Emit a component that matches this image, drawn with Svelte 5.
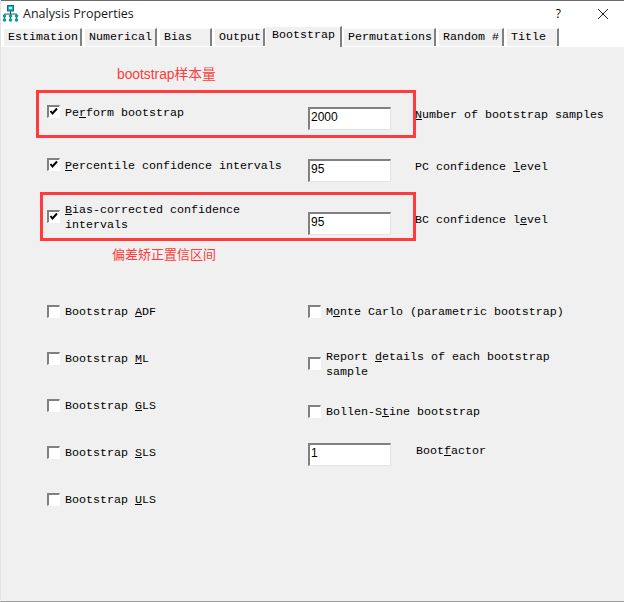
<script lang="ts">
  // Amos "Analysis Properties" dialog, Bootstrap tab, with red annotations on top.
  const tabs = [
    { label: "Estimation", width: 79 },
    { label: "Numerical", width: 73 },
    { label: "Bias", width: 53 },
    { label: "Output", width: 51 },
    { label: "Bootstrap", width: 77, active: true },
    { label: "Permutations", width: 93 },
    { label: "Random #", width: 66 },
    { label: "Title", width: 53 },
  ];

  const leftChecks = [
    ["Bootstrap ", "A", "DF"],
    ["Bootstrap ", "M", "L"],
    ["Bootstrap ", "G", "LS"],
    ["Bootstrap ", "S", "LS"],
    ["Bootstrap ", "U", "LS"],
  ];
</script>

{#snippet check(on: boolean)}
  <span class="check">
    {#if on}
      <svg width="10" height="10" viewBox="0 0 10 10"><path d="M1.5 4 L3.5 6.5 L8 1.5" fill="none" stroke="#000" stroke-width="2" /></svg>
    {/if}
  </span>
{/snippet}

{#snippet label(a: string, u: string, b: string)}{a}<u>{u}</u>{b}{/snippet}

<div class="window">
  <header class="titlebar">
    <svg class="logo" width="17" height="17" viewBox="0 0 17 17">
      <path d="M8.5 6 V9 M2.5 9 H14.5 M2.5 9 V15 M8.5 9 V15 M14.5 9 V15" stroke="#33505a" stroke-width="1" fill="none" />
      <rect x="5.5" y="0.5" width="6" height="5.5" fill="#14b4b8" stroke="#0b6f78" />
      <rect x="7" y="2" width="3" height="2" fill="#b8f4f4" />
      {#each [2.5, 8.5, 14.5] as x}
        <circle cx={x} cy="11" r="1.8" fill="#0f9aa0" />
        <circle cx={x} cy="15" r="1.8" fill="#0f9aa0" />
      {/each}
    </svg>
    <span class="title">Analysis Properties</span>
    <span class="help">?</span>
    <svg class="close" width="12" height="12" viewBox="0 0 12 12"><path d="M1 1 L11 11 M11 1 L1 11" stroke="#222" stroke-width="1" fill="none" /></svg>
  </header>

  <nav class="tabs">
    {#each tabs as t}
      <span class="tab" class:active={t.active} style:width="{t.width}px">{t.label}</span>
    {/each}
  </nav>

  <main class="panel">
    <section class="row row-a">
      {@render check(true)}
      <span class="text">{@render label("Pe", "r", "form bootstrap")}</span>
      <span class="input">2000</span>
      <span class="side">{@render label("", "N", "umber of bootstrap samples")}</span>
    </section>
    <section class="row row-b">
      {@render check(true)}
      <span class="text">{@render label("", "P", "ercentile confidence intervals")}</span>
      <span class="input">95</span>
      <span class="side">{@render label("PC confidence ", "l", "evel")}</span>
    </section>
    <section class="row row-c">
      {@render check(true)}
      <span class="text">{@render label("", "B", "ias-corrected confidence")}<br />intervals</span>
      <span class="input">95</span>
      <span class="side">{@render label("BC confidence l", "e", "vel")}</span>
    </section>

    <section class="lower">
      <div class="col col-left">
        {#each leftChecks as [a, u, b]}
          <div class="opt">
            {@render check(false)}
            <span class="text">{@render label(a, u, b)}</span>
          </div>
        {/each}
      </div>
      <div class="col col-right">
        <div class="opt">
          {@render check(false)}
          <span class="text">{@render label("M", "o", "nte Carlo (parametric bootstrap)")}</span>
        </div>
        <div class="opt report">
          {@render check(false)}
          <span class="text">{@render label("Report ", "d", "etails of each bootstrap")}<br />sample</span>
        </div>
        <div class="opt bollen">
          {@render check(false)}
          <span class="text">{@render label("Bollen-S", "t", "ine bootstrap")}</span>
        </div>
        <div class="factor">
          <span class="input">1</span>
          <span class="side">{@render label("Boot", "f", "actor")}</span>
        </div>
      </div>
    </section>
  </main>

  <!-- hand-drawn annotations pasted over the dialog -->
  <div class="mark mark-a"></div>
  <div class="mark mark-b"></div>
  <span class="note note-a">bootstrap样本量</span>
  <span class="note note-b">偏差矫正置信区间</span>
</div>

<style>
  :global(body) {
    margin: 0;
    background: #f0f0f0;
  }
  .window {
    position: relative;
    width: 624px;
    height: 602px;
    overflow: hidden;
    box-sizing: border-box;
    display: flex;
    flex-direction: column;
    background: #f0f0f0;
    border-bottom: 1px solid #a0a0a0;
    border-left: 1px solid #e3e3e3;
    font-family: "Liberation Mono", monospace;
    font-size: 11.67px;
    line-height: 15px;
    color: #000;
  }
  .titlebar {
    display: flex;
    align-items: center;
    height: 26px;
    box-sizing: border-box;
    margin-left: -1px;
    padding-left: 2px;
    background: #fff;
    border-top: 1px solid #6b6b6b;
  }
  .title {
    margin-left: 4px;
    font-family: "Open Sans", sans-serif;
    font-size: 12.5px;
    color: #1a1a1a;
  }
  .help {
    margin-left: auto;
    font-family: "Open Sans", sans-serif;
    font-size: 12px;
  }
  .close {
    margin: 0 15px 0 36px;
  }
  .tabs {
    display: flex;
    align-items: flex-end;
    gap: 2px;
    height: 21px;
    padding: 0 0 1px 2px;
    background: #fff;
    box-sizing: border-box;
  }
  .tab {
    box-sizing: border-box;
    height: 18px;
    padding: 1px 0 0 4px;
    background: #f0f0f0;
    border-left: 1px solid #fff;
    border-right: 2px solid #808080;
    white-space: pre;
    border-top: 1px solid #fff;
  }
  .tab.active {
    height: 21px;
    margin: 0 -1px -1px -2px;
    padding: 1px 0 0 6px;
    position: relative;
  }
  .panel {
    flex: 1;
    padding-top: 57px;
  }
  .row {
    display: grid;
    grid-template-columns: 18px 243px 107px auto;
    padding-left: 46px;
    align-items: start;
  }
  .check {
    display: block;
    box-sizing: border-box;
    width: 13px;
    height: 13px;
    background: #fff;
    border: 2px solid #808080;
    border-right: 1px solid #fff;
    border-bottom: 1px solid #fff;
  }
  .check svg {
    display: block;
  }
  .text,
  .side {
    padding-top: 1px;
  }
  .input {
    display: block;
    box-sizing: border-box;
    width: 83px;
    height: 23px;
    padding: 1px 0 0 1px;
    background: #fff;
    border: 2px solid #808080;
    border-right: 1px solid #e3e3e3;
    border-bottom: 1px solid #e3e3e3;
    font-family: "Liberation Sans", sans-serif;
    font-size: 12px;
  }
  .row-a {
    height: 53px;
  }
  .row-a .check { margin-top: 1px; }
  .row-a .text { margin-top: 1px; }
  .row-a .input { margin-top: 3px; }
  .row-a .side { margin-top: 3px; }

  .row-b {
    height: 44px;
  }
  .row-b .check { margin-top: 1px; }
  .row-b .text { margin-top: 1px; }
  .row-b .input { margin-top: 2px; }
  .row-b .side { margin-top: 2px; }

  .row-c {
    height: 103px;
  }
  .row-c .check { margin-top: 9px; }
  .row-c .text { margin-top: 1px; }
  .row-c .input { margin-top: 11px; }
  .row-c .side { margin-top: 11px; }

  .lower {
    display: grid;
    grid-template-columns: 261px auto;
    padding-left: 46px;
  }
  .col-left .opt {
    height: 47px;
  }
  .opt {
    display: flex;
    align-items: flex-start;
    gap: 5px;
  }
  .opt .check {
    margin-top: 1px;
    flex: none;
  }
  .col-right .opt:first-child {
    height: 44px;
  }
  .report {
    height: 56px;
  }
  .report .text {
    margin-top: 1px;
  }
  .opt.report .check {
    margin-top: 9px;
  }
  .bollen {
    height: 34px;
  }
  .factor {
    display: flex;
    align-items: flex-start;
    gap: 25px;
    margin-top: 5px;
  }
  .mark {
    position: absolute;
    box-sizing: border-box;
    border: 3px solid #ff3b3b;
  }
  .mark-a {
    left: 35px;
    top: 90px;
    width: 380px;
    height: 48px;
  }
  .mark-b {
    left: 39px;
    top: 192px;
    width: 376px;
    height: 49px;
  }
  .note {
    position: absolute;
    font-family: "Liberation Sans", "Noto Sans CJK SC", sans-serif;
    color: #ff3b3b;
    white-space: nowrap;
  }
  .note-a {
    left: 116px;
    top: 67px;
    font-size: 13.8px;
  }
  .note-b {
    left: 111px;
    top: 247px;
    font-size: 13px;
  }
</style>
